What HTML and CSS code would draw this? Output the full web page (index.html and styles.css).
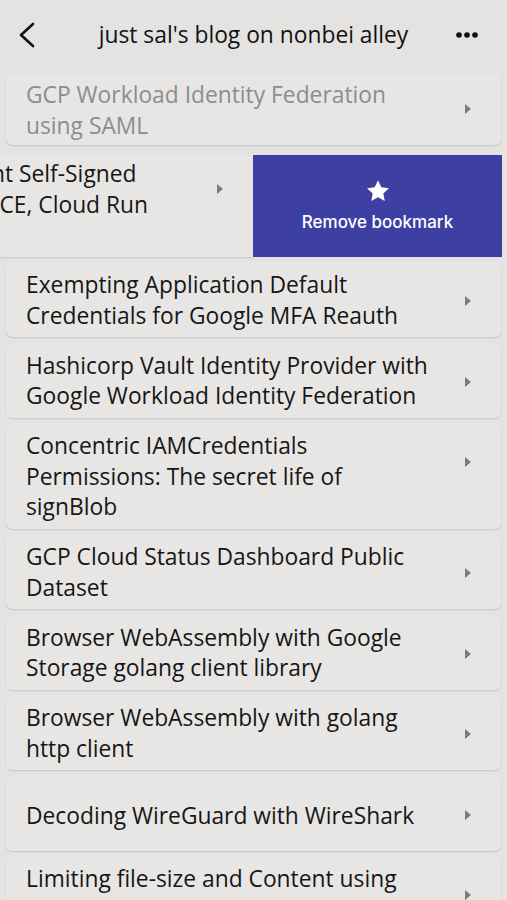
FILE: index.html
```html
<!DOCTYPE html>
<html lang="en">
<head>
<meta charset="utf-8">
<meta name="viewport" content="width=device-width, initial-scale=1">
<title>just sal's blog on nonbei alley</title>
<link rel="stylesheet" href="styles.css">
</head>
<body>
<div class="app">
  <header class="topbar">
    <div class="topbar-left">
      <button class="icon-btn back" aria-label="Back">
        <svg width="18" height="26" viewBox="0 0 18 26"><polyline points="15,2 3,13 15,24" fill="none" stroke="#111" stroke-width="2.6" stroke-linecap="round" stroke-linejoin="round"/></svg>
      </button>
    </div>
    <h1 class="title">just sal's blog on nonbei alley</h1>
    <div class="topbar-right">
      <button class="icon-btn more" aria-label="More">
        <svg width="22" height="6" viewBox="0 0 22 6"><circle cx="3" cy="3" r="2.8" fill="#111"/><circle cx="11" cy="3" r="2.8" fill="#111"/><circle cx="19" cy="3" r="2.8" fill="#111"/></svg>
      </button>
    </div>
  </header>

  <div class="list-viewport">
    <main class="list">
      <div class="card card--faded">
        <p class="card-title">GCP Workload Identity Federation using SAML</p>
        <span class="chev"></span>
      </div>

      <div class="swipe-row">
        <div class="card card--swiped">
          <p class="card-title">Cloud Service Account Self-Signed Identity Tokens for GCE, Cloud Run and GKE</p>
          <span class="chev"></span>
        </div>
        <button class="swipe-action">
          <svg class="star" width="26" height="25" viewBox="0 0 24 24"><path d="M12 1.2l3.2 6.7 7.3.9-5.4 5.1 1.4 7.3L12 17.6l-6.5 3.6 1.4-7.3-5.4-5.1 7.3-.9z" fill="#fff"/></svg>
          <span class="swipe-label">Remove bookmark</span>
        </button>
      </div>

      <div class="card">
        <p class="card-title">Exempting Application Default Credentials for Google MFA Reauth</p>
        <span class="chev"></span>
      </div>
      <div class="card">
        <p class="card-title">Hashicorp Vault Identity Provider with Google Workload Identity Federation</p>
        <span class="chev"></span>
      </div>
      <div class="card">
        <p class="card-title">Concentric IAMCredentials Permissions: The secret life of signBlob</p>
        <span class="chev"></span>
      </div>
      <div class="card">
        <p class="card-title">GCP Cloud Status Dashboard Public Dataset</p>
        <span class="chev"></span>
      </div>
      <div class="card">
        <p class="card-title">Browser WebAssembly with Google Storage golang client library</p>
        <span class="chev"></span>
      </div>
      <div class="card">
        <p class="card-title">Browser WebAssembly with golang http client</p>
        <span class="chev"></span>
      </div>
      <div class="card card--single">
        <p class="card-title">Decoding WireGuard with WireShark</p>
        <span class="chev"></span>
      </div>
      <div class="card">
        <p class="card-title">Limiting file-size and Content using Signed URLs on Google Cloud Storage</p>
        <span class="chev"></span>
      </div>
    </main>
  </div>
</div>
</body>
</html>
```

FILE: styles.css
```css
* { box-sizing: border-box; }

html, body {
  margin: 0;
  padding: 0;
  background: #e4e3e1;
  overflow: hidden;
}

body {
  width: 507px;
  height: 900px;
  font-family: "Open Sans", "Noto Sans", sans-serif;
  color: #161616;
}

.app {
  display: flex;
  flex-direction: column;
  height: 900px;
}

/* ---------- top bar ---------- */
.topbar {
  flex: 0 0 75px;
  display: grid;
  grid-template-columns: 1fr auto 1fr;
  align-items: center;
  padding-bottom: 5px;
}

.topbar-left { display: flex; justify-content: flex-start; padding-left: 18px; }
.topbar-right { display: flex; justify-content: flex-end; padding-right: 29px; }

.icon-btn {
  border: 0;
  background: none;
  padding: 0;
  margin: 0;
  display: flex;
  align-items: center;
  justify-content: center;
}

.title {
  margin: 0;
  font-size: 22.8px;
  font-weight: 500;
  line-height: 30px;
  color: #111;
  white-space: nowrap;
}

/* ---------- list ---------- */
.list-viewport {
  flex: 1;
  overflow: hidden;
}

.list {
  display: flex;
  flex-direction: column;
  gap: 5.5px;
  padding: 0 6px;
  margin-top: -5px;
}

.card {
  display: flex;
  align-items: flex-start;
  min-height: 75px;
  padding: 8px 30px 6px 20px;
  background: #e7e6e4;
  border-radius: 6px;
  box-shadow: 0 1px 1.5px rgba(0, 0, 0, 0.13);
}

.card-title {
  flex: 1;
  align-self: center;
  margin: 0 33px 0 0;
  font-size: 22.8px;
  line-height: 30.5px;
  font-weight: 400;
  color: #161616;
}

.chev {
  flex: 0 0 auto;
  width: 0;
  height: 0;
  margin-top: 26px;
  border-left: 6px solid #7b7b7b;
  border-top: 5px solid transparent;
  border-bottom: 5px solid transparent;
}

.card--single { padding-top: 10px; padding-bottom: 4px; }
.card--single .chev { margin-top: 24px; }

/* first card: partly scrolled under the bar, faded */
.card--faded {
  margin-bottom: 4.5px;
  padding-top: 10px;
  padding-bottom: 4px;
}
.card--faded .card-title { color: #8d8d8d; }
.card--faded .chev { margin-top: 24px; }

/* swiped row with revealed action */
.swipe-row {
  display: flex;
  min-height: 101px;
}

.card--swiped {
  flex: 0 0 495px;
  margin-left: -248px;
  min-height: 101px;
  padding-top: 4px;
  padding-bottom: 6px;
  border-radius: 0;
}
.card--swiped .card-title { align-self: flex-start; }
.card--swiped .chev { margin-top: 25px; }

.swipe-action {
  flex: 0 0 249px;
  margin-right: -1px;
  border: 0;
  padding: 0;
  background: #3e3fa3;
  color: #fff;
  display: flex;
  flex-direction: column;
  align-items: center;
  justify-content: center;
  gap: 8px;
}

.star { display: block; }

.swipe-label {
  font-family: Inter, "Liberation Sans", sans-serif;
  font-size: 17px;
  font-weight: 500;
  line-height: 20px;
  color: #fff;
}
```
